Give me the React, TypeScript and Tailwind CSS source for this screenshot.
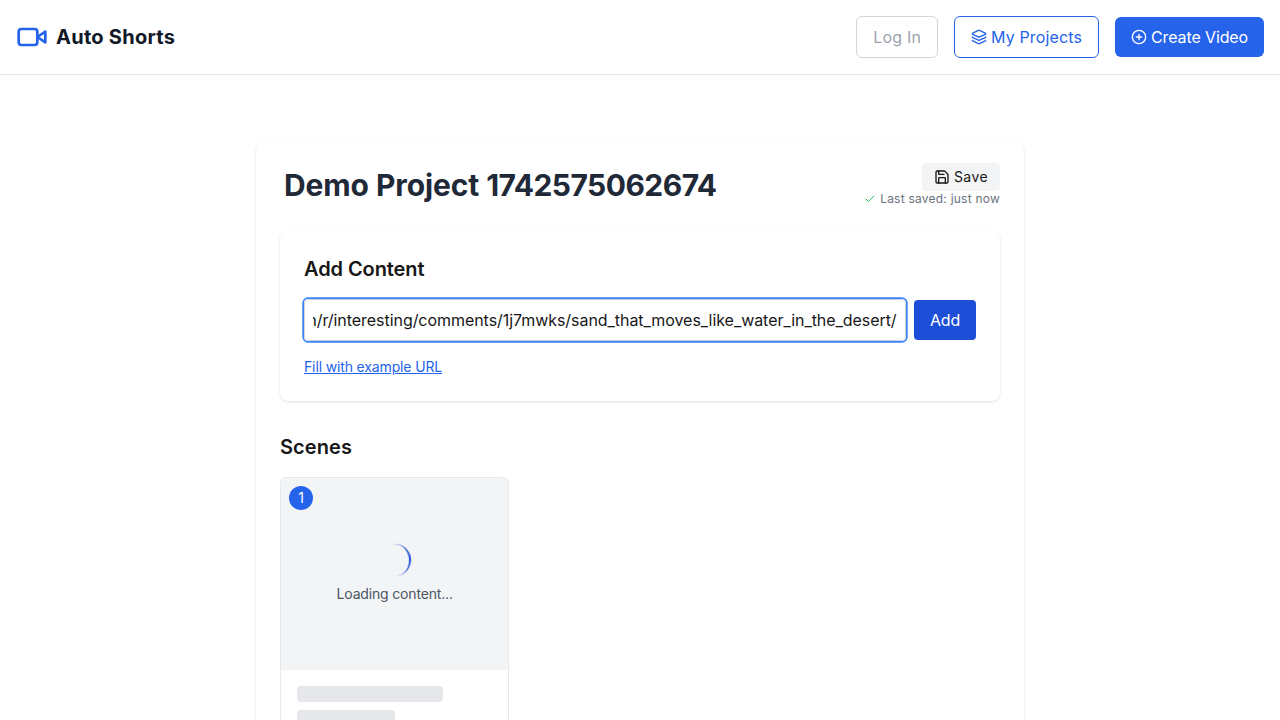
import React, { useEffect, useRef } from "react";
import { Check, CirclePlus, Layers, Save } from "lucide-react";

function VideoIcon() {
  return (
    <svg
      viewBox="0 0 24 24"
      className="h-8 w-8 text-[#2563eb]"
      fill="none"
      stroke="currentColor"
      strokeWidth="2"
      strokeLinecap="round"
      strokeLinejoin="round"
    >
      <path d="m22 8-6 4 6 4V8Z" />
      <rect x="2" y="6" width="14" height="12" rx="2" ry="2" />
    </svg>
  );
}

function Header() {
  return (
    <header className="flex items-center justify-between border-b border-gray-200 bg-white p-4">
      <div className="flex items-center gap-2">
        <VideoIcon />
        <span className="text-xl font-bold tracking-[0.26px] text-[#111827]">Auto Shorts</span>
      </div>
      <nav className="flex items-center gap-4">
        <button className="rounded-md border border-[#d1d5db] px-4 py-2 tracking-[0.2px] text-[#9ca3af]">Log In</button>
        <button className="flex items-center gap-1 rounded-md border border-[#2563eb] px-4 py-2 tracking-[0.13px] text-[#2563eb]">
          <Layers className="h-4 w-4" />
          My Projects
        </button>
        <button className="flex items-center gap-1 rounded-md bg-[#2563eb] px-4 py-2 tracking-[-0.12px] text-white">
          <CirclePlus className="h-4 w-4" />
          Create Video
        </button>
      </nav>
    </header>
  );
}

function AddContent() {
  const input = useRef<HTMLInputElement>(null);
  useEffect(() => {
    if (input.current) input.current.scrollLeft = input.current.scrollWidth;
  }, []);
  return (
    <section className="mb-8 rounded-lg bg-white p-6 shadow-[0_1px_3px_0_rgba(0,0,0,0.1),0_1px_2px_-1px_rgba(0,0,0,0.1)]">
      <h2 className="mb-4 text-xl font-semibold tracking-[-0.08px]">Add Content</h2>
      <div className="mb-4 flex items-center gap-2">
        <input
          ref={input}
          className="h-[42px] min-w-0 flex-1 rounded-sm border border-[#d1d5db] p-2 tracking-[-0.05px] shadow-[0_0_0_1.7px_#3b82f6] outline-none"
          defaultValue="https://www.reddit.com/r/interesting/comments/1j7mwks/sand_that_moves_like_water_in_the_desert/"
        />
        <button className="rounded-sm bg-[#1d4ed8] px-4 py-2 tracking-[-0.2px] text-white">Add</button>
      </div>
      <button className="block text-sm tracking-[-0.14px] text-[#2563eb] underline">Fill with example URL</button>
    </section>
  );
}

function SceneCard() {
  return (
    <article className="overflow-hidden rounded-md border border-[#e5e7eb] bg-white">
      <div className="relative flex h-48 flex-col items-center justify-center bg-[#f3f4f6]">
        <span className="absolute top-2 left-2 flex h-6 w-6 items-center justify-center rounded-full bg-[#2563eb] text-sm text-white">
          1
        </span>
        <div className="mb-2 h-8 w-8 rotate-[-96deg] rounded-full border-b-2 border-[#1d4ed8] will-change-transform" />
        <p className="text-sm tracking-[-0.17px] text-[#4b5563]">Loading content...</p>
      </div>
      <div className="p-4">
        <div className="mb-2 h-4 w-3/4 rounded-sm bg-[#e5e7eb]" />
        <div className="h-4 w-1/2 rounded-sm bg-[#e5e7eb]" />
      </div>
    </article>
  );
}

export default function App() {
  return (
    <div className="h-screen overflow-hidden bg-white font-['Inter',sans-serif] text-[#171717]">
      <Header />
      <main className="mx-auto mt-16 h-[900px] w-[768px] rounded-xl bg-white p-6 shadow-[0_1px_3px_0_rgba(0,0,0,0.1),0_1px_2px_-1px_rgba(0,0,0,0.1)]">
        <div className="mb-6 flex h-11 items-center justify-between">
          <h1 className="px-1 text-3xl font-bold tracking-[-0.1px] text-[#1f2937]">
            Demo Project <span className="tracking-[-0.54px]">1742575062674</span>
          </h1>
          <div className="flex flex-col items-end">
            <button className="flex items-center gap-1 rounded-sm bg-[#f3f4f6] px-3 py-1 text-sm tracking-[0.42px]">
              <Save className="h-4 w-4" />
              Save
            </button>
            <div className="flex items-center gap-1 text-xs tracking-[0.23px] text-[#6b7280]">
              <Check className="h-3 w-3 text-[#22c55e]" />
              Last saved: just now
            </div>
          </div>
        </div>
        <AddContent />
        <h2 className="mb-4 text-xl font-semibold tracking-[0.1px]">Scenes</h2>
        <div className="grid grid-cols-3 gap-4">
          <SceneCard />
        </div>
      </main>
    </div>
  );
}
